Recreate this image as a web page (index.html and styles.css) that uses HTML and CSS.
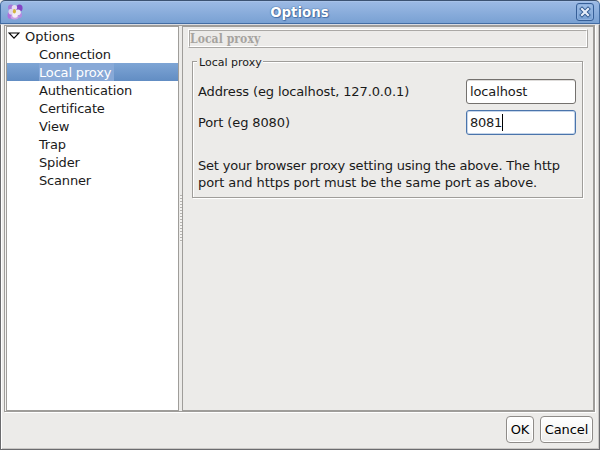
FILE: index.html
```html
<!DOCTYPE html>
<html lang="en">
<head>
<meta charset="utf-8">
<title>Options</title>
<link rel="stylesheet" href="styles.css">
</head>
<body>
<div class="window">
  <header class="titlebar">
    <svg class="flower" width="16" height="16" viewBox="0 0 16 16">
      <ellipse cx="4" cy="3.6" rx="3" ry="3" fill="#a878d8"/>
      <ellipse cx="12.4" cy="4" rx="3.2" ry="3.6" fill="#8444c4"/>
      <ellipse cx="3" cy="11.4" rx="2.5" ry="3.4" fill="#b070dc"/>
      <ellipse cx="12.4" cy="11" rx="2.6" ry="3" fill="#b58be0"/>
      <ellipse cx="7.6" cy="12.8" rx="4" ry="2.6" fill="#c9a0e6"/>
      <circle cx="7.4" cy="3.6" r="2.7" fill="#e6dcf2"/>
      <circle cx="4.5" cy="7.8" r="3" fill="#e0d4ee"/>
      <circle cx="11" cy="8.2" r="2.8" fill="#efe8f5"/>
      <circle cx="8" cy="11" r="2.8" fill="#f3edf6"/>
      <ellipse cx="7.4" cy="7.2" rx="1.5" ry="2.2" fill="#d4b33c"/>
    </svg>
    <h1>Options</h1>
    <button class="close" aria-label="Close">
      <svg width="12" height="12" viewBox="0 0 12 12">
        <path d="M3 3 9 9M9 3 3 9" stroke="#31598f" stroke-width="4" stroke-linecap="square"/>
        <path d="M3 3 9 9M9 3 3 9" stroke="#e6eefa" stroke-width="2.2" stroke-linecap="square"/>
      </svg>
    </button>
  </header>
  <main class="body">
    <div class="split">
      <nav class="tree">
        <div class="row root"><svg width="12" height="8" viewBox="0 0 12 8"><path d="M1 1h10L6 6.2z" fill="#fff" stroke="#000" stroke-width="1.2"/></svg><span>Options</span></div>
        <div class="row"><span>Connection</span></div>
        <div class="row selected"><span>Local proxy</span></div>
        <div class="row"><span>Authentication</span></div>
        <div class="row"><span>Certificate</span></div>
        <div class="row"><span>View</span></div>
        <div class="row"><span>Trap</span></div>
        <div class="row"><span>Spider</span></div>
        <div class="row"><span>Scanner</span></div>
      </nav>
      <div class="divider"><i class="grip"></i></div>
      <section class="panel">
        <div class="heading"><div class="heading-text">Local proxy</div></div>
        <div class="group">
          <div class="legend">Local proxy</div>
          <div class="field"><label>Address (eg localhost, 127.0.0.1)</label><div class="input">localhost</div></div>
          <div class="field"><label>Port (eg 8080)</label><div class="input focus">8081<i class="caret"></i></div></div>
          <p>Set your browser proxy setting using the above. The http<br><span class="last-line">port and https port must be the same port as above.</span></p>
        </div>
      </section>
    </div>
    <footer class="actions">
      <button class="btn ok">OK</button>
      <button class="btn cancel">Cancel</button>
    </footer>
  </main>
</div>
</body>
</html>
```
FILE: styles.css
```css
* { box-sizing: border-box; }
body {
  margin: 0;
  background: #ececec;
  color: #1a1a1a;
  font: 13px/18px "DejaVu Sans", sans-serif;
  overflow: hidden;
}
.window {
  width: 600px;
  height: 450px;
  display: flex;
  flex-direction: column;
}
.titlebar {
  height: 24px;
  flex: none;
  display: flex;
  align-items: center;
  border: 1px solid #426ca3;
  border-top-color: #3c5272;
  border-radius: 5px 5px 0 0;
  background: linear-gradient(#b3cbed 0, #9bb9e4 1px, #79a1d3 100%);
  padding: 0 5px 0 6px;
}
.flower { flex: none; }
.titlebar h1 {
  flex: 1;
  margin: 0;
  padding-top: 1px;
  text-align: center;
  font-size: 13.4px;
  line-height: 20px;
  color: #fff;
  text-shadow: 0 0 1px #31598f, 0 0 1px #31598f, 1px 1px 1px #4b74ad;
}
.close {
  width: 18px;
  height: 18px;
  padding: 0;
  border: 1px solid #365f98;
  border-radius: 3px;
  background: linear-gradient(#9ebde6, #769fd2);
  box-shadow: inset 0 0 0 1px #8fb1df;
  display: flex;
  align-items: center;
  justify-content: center;
}
.body {
  flex: 1;
  display: flex;
  flex-direction: column;
  border: 1px solid #6b6b6e;
  border-top-color: #d9dce2;
  background: #ecebe9;
  box-shadow: inset 1px 0 #fff, inset -1px -1px #c9c7c5;
  padding: 0 4px 0 3px;
}
.split {
  height: 387px;
  flex: none;
  display: flex;
  border: 1px solid #9f9d9a;
  box-shadow: 1px 1px #fff;
  padding-left: 1px;
  background: #f5f4f2;
}
.tree {
  width: 173px;
  border: 1px solid #9f9d9a;
  background: #fff;
}
.row {
  height: 18px;
  padding-left: 32px;
  letter-spacing: -0.17px;
  line-height: 20px;
}
.row span { display: inline-block; height: 18px; padding-right: 3px; }
.root {
  display: flex;
  align-items: center;
  gap: 5px;
  padding-left: 1px;
  letter-spacing: -0.05px;
}
.selected {
  color: #fff;
  background: linear-gradient(#7ea5d5, #628dc3);
}
.selected span { background: #88a9d7; }
.divider {
  width: 3px;
  background: #ecebe9;
  display: flex;
  align-items: center;
  justify-content: flex-end;
}
.grip {
  width: 2px;
  height: 47px;
  background: repeating-linear-gradient(#b5b3b0 0 1px, #f5f4f2 1px 3px);
}
.panel {
  flex: 1;
  border: 1px solid #9f9d9a;
  background: #ecebe9;
  padding: 2px 5px 0 5px;
}
.heading {
  height: 19px;
  border: 1px solid #fff;
  border-right-color: #aaa8a5;
  border-bottom-color: #aaa8a5;
}
.heading-text {
  height: 17px;
  border: 1px solid #aaa8a5;
  border-right-color: #fff;
  border-bottom-color: #fff;
  font: bold 12px/16px "DejaVu Serif Condensed", "DejaVu Serif", serif;
  letter-spacing: 0.08px;
  color: #a6a39f;
}
.group {
  height: 137px;
  margin: 13px 5px 0 4px;
  border: 1px solid #9f9d9a;
  box-shadow: 1px 1px #fff, inset 1px 1px #fff;
  padding: 0 6px 0 5px;
}
.legend {
  width: max-content;
  height: 14px;
  margin: -7px 0 10px -1px;
  padding: 0 1px 0 2px;
  background: #ecebe9;
  font-size: 11px;
  line-height: 15px;
}
.field {
  display: flex;
  align-items: center;
  justify-content: space-between;
  height: 25px;
  margin-bottom: 6px;
  letter-spacing: -0.12px;
}
.input {
  width: 110px;
  height: 25px;
  display: flex;
  align-items: center;
  padding: 0 3px;
  border: 1px solid #74716e;
  border-radius: 3px;
  background: #fff;
  box-shadow: inset 0 1px #dedcda;
}
.focus {
  letter-spacing: -0.3px;
  border-color: #4a74ab;
  box-shadow: inset 0 0 0 1px #c5d5ea;
}
.caret { width: 1px; height: 17px; background: #000; }
.group p {
  margin: 22px 0 0;
  line-height: 17px;
  letter-spacing: -0.19px;
  white-space: nowrap;
}
.last-line { letter-spacing: -0.09px; }
.actions {
  display: flex;
  justify-content: flex-end;
  gap: 6px;
  padding: 4px 2px 0 0;
}
.btn {
  height: 27px;
  padding: 0;
  border: 1px solid #8f8c89;
  border-radius: 4px;
  background: linear-gradient(#fff, #f7f7f6 50%, #ecebe9);
  box-shadow: inset 0 0 0 1px #fff;
  font: 13px/24px "DejaVu Sans", sans-serif;
  letter-spacing: -0.1px;
  color: #000;
}
.ok { width: 28px; }
.cancel { width: 53px; }
```
